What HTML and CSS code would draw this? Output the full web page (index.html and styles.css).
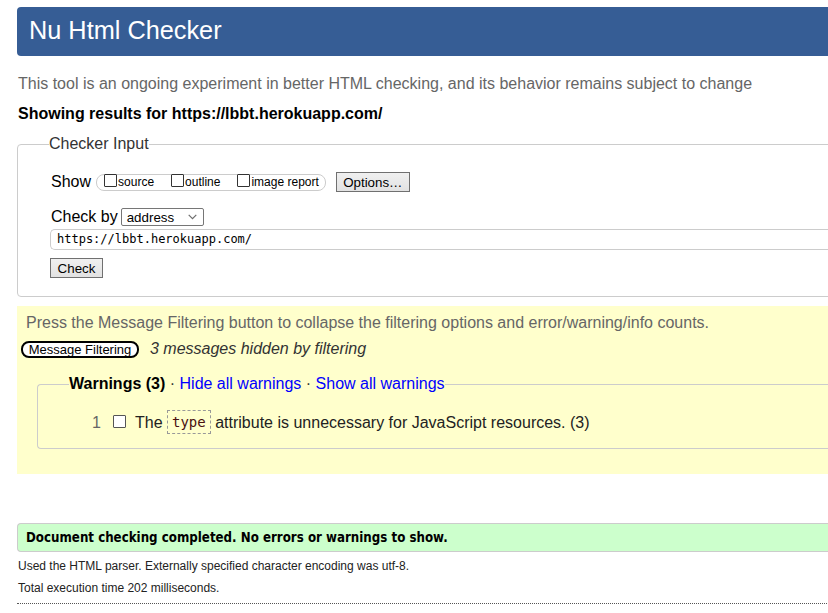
FILE: index.html
```html
<!DOCTYPE html>
<html lang="en">
<head>
<meta charset="utf-8">
<title>Nu Html Checker</title>
<link rel="stylesheet" href="styles.css">
</head>
<body>
<div class="page">
  <h1 class="title">Nu Html Checker</h1>
  <p class="intro">This tool is an ongoing experiment in better HTML checking, and its behavior remains subject to change</p>
  <p class="showing">Showing results for https://lbbt.herokuapp.com/</p>

  <fieldset class="input-box">
    <legend class="input-legend">Checker Input</legend>
    <div class="row row-show">
      <span class="row-label">Show</span>
      <span class="pill">
        <span class="opt"><span class="cb"></span><span class="opt-text">source</span></span>
        <span class="opt"><span class="cb"></span><span class="opt-text">outline</span></span>
        <span class="opt opt-last"><span class="cb"></span><span class="opt-text">image report</span></span>
      </span>
      <span class="btn btn-options">Options…</span>
    </div>
    <div class="row row-by">
      <span class="row-label">Check by</span>
      <span class="select">address
        <svg class="chev" width="9" height="6" viewBox="0 0 9 6"><path d="M0.7 0.9 L4.5 4.6 L8.3 0.9" fill="none" stroke="#6d6d6d" stroke-width="1.2"/></svg>
      </span>
    </div>
    <div class="url">https://lbbt.herokuapp.com/</div>
    <div class="row-check"><span class="btn btn-check">Check</span></div>
  </fieldset>

  <div class="results">
    <p class="filter-note">Press the Message Filtering button to collapse the filtering options and error/warning/info counts.</p>
    <div class="filter-row">
      <span class="filter-btn">Message Filtering</span>
      <span class="hidden-note">3 messages hidden by filtering</span>
    </div>
    <fieldset class="warn-box">
      <legend class="warn-legend"><b>Warnings (3)</b> · <a class="lnk">Hide all warnings</a> · <a class="lnk">Show all warnings</a></legend>
      <div class="warn-item">
        <span class="num">1</span>
        <span class="cb cb-item"></span>
        <span class="msg">The <code class="code">type</code> attribute is unnecessary for JavaScript resources. (3)</span>
      </div>
    </fieldset>
  </div>

  <div class="success">Document checking completed. No errors or warnings to show.</div>
  <p class="details">Used the HTML parser. Externally specified character encoding was utf-8.</p>
  <p class="details details-2">Total execution time 202 milliseconds.</p>
  <div class="dotted"></div>
</div>
</body>
</html>
```

FILE: styles.css
```css
html {
  overflow: hidden;
  background: #fff;
}
body {
  margin: 0;
  font-family: "Liberation Sans", Arial, sans-serif;
  color: #000;
}
.page {
  margin-left: 17px;
  width: 920px;
}
.title {
  margin: 7px 0 0;
  height: 49px;
  box-sizing: border-box;
  padding: 0 0 2px 12px;
  line-height: 47px;
  font-size: 25.3px;
  font-weight: normal;
  color: #fff;
  background: #365d95;
  border-radius: 4px;
}
.intro {
  margin: 19px 0 0 1px;
  font-size: 16px;
  line-height: 18px;
  color: #666;
}
.showing {
  margin: 12px 0 0 1px;
  font-size: 16px;
  line-height: 18px;
  font-weight: bold;
}
.input-box {
  margin: 12px 0 0;
  padding: 18px 0 18px 33px;
  border: 1px solid #ccc;
  border-radius: 4px;
  min-width: 0;
}
.input-legend {
  padding: 0;
  margin-left: -2px;
  font-size: 16px;
  line-height: 18px;
  color: #333;
}
.row {
  display: flex;
  align-items: center;
  height: 22px;
  font-size: 16px;
}
.row-by {
  margin-top: 14px;
  height: 20px;
}
.row-label {
  line-height: 18px;
}
.pill {
  display: flex;
  align-items: center;
  height: 17px;
  box-sizing: border-box;
  margin-left: 5px;
  padding: 0 6px 0 7px;
  border: 1px solid #ccc;
  border-radius: 8px;
}
.opt {
  display: flex;
  align-items: center;
  margin-right: 17px;
}
.opt-last {
  margin-right: 0;
}
.cb {
  display: inline-block;
  width: 13px;
  height: 13px;
  box-sizing: border-box;
  border: 1px solid #333;
  border-radius: 1px;
  background: #fff;
  margin-top: -3px;
}
.opt-text {
  margin-left: 1px;
  font-size: 12px;
  line-height: 14px;
  color: #000;
}
.btn {
  display: inline-flex;
  align-items: center;
  justify-content: center;
  box-sizing: border-box;
  height: 20px;
  font-size: 13.33px;
  border: 1px solid #707070;
  background: linear-gradient(#f0f0f0, #e2e2e2);
  color: #000;
}
.btn-options {
  margin-left: 10px;
  width: 74px;
}
.select {
  display: inline-flex;
  align-items: center;
  margin-left: 3px;
  width: 83px;
  height: 18px;
  box-sizing: border-box;
  padding: 0 5px 0 5px;
  border: 1px solid #767676;
  border-radius: 2px;
  font-size: 13.33px;
  background: #fff;
  justify-content: space-between;
}
.chev {
  margin-right: 1px;
}
.url {
  margin: 2px 0 0 -1px;
  height: 21px;
  box-sizing: border-box;
  padding-left: 6px;
  border: 1px solid #ccc;
  border-right: 0;
  border-radius: 5px 0 0 5px;
  font-family: "DejaVu Sans Mono", "Liberation Mono", monospace;
  font-size: 12px;
  line-height: 19px;
  color: #000;
}
.row-check {
  margin: 8px 0 0 -1px;
  height: 20px;
}
.btn-check {
  width: 53px;
}
.results {
  margin-top: 9px;
  padding: 8px 0 25px 4px;
  background: #ffffcc;
}
.filter-note {
  margin: 0 0 0 5px;
  font-size: 16px;
  line-height: 18px;
  color: #666;
}
.filter-row {
  display: flex;
  align-items: center;
  margin-top: 7px;
  height: 20px;
}
.filter-btn {
  display: inline-flex;
  align-items: center;
  justify-content: center;
  box-sizing: border-box;
  width: 118px;
  height: 17px;
  border: 2px solid #000;
  border-radius: 8px;
  background: #fff;
  font-size: 13px;
  color: #000;
}
.hidden-note {
  margin-left: 11px;
  font-size: 16px;
  font-style: italic;
  color: #333;
}
.warn-box {
  margin: 16px 0 0 16px;
  padding: 18px 0 13px 31px;
  border: 1px solid #ccc;
  border-right: 0;
  border-radius: 4px 0 0 4px;
  min-width: 0;
}
.warn-legend {
  padding: 0;
  font-size: 16px;
  line-height: 18px;
  color: #333;
}
.warn-legend b {
  color: #000;
}
.lnk {
  color: #00f;
  text-decoration: none;
}
.warn-item {
  display: flex;
  align-items: center;
  height: 24px;
  font-size: 16px;
  color: #222;
}
.num {
  margin-left: 23px;
  width: 9px;
  color: #666;
}
.cb-item {
  margin: -3px 9px 0 12px;
  border-color: #555;
}
.code {
  display: inline-block;
  box-sizing: border-box;
  height: 24px;
  padding: 0 4px;
  line-height: 22px;
  border: 1px dashed #999;
  font-family: "DejaVu Sans Mono", monospace;
  font-size: 14px;
  color: #4a1010;
  vertical-align: middle;
  margin: -3px 0 0;
}
.success {
  margin-top: 49px;
  height: 29px;
  box-sizing: border-box;
  padding-left: 8px;
  border: 1px solid #ccc;
  border-right: 0;
  border-radius: 4px 0 0 4px;
  background: #ccffcc;
  font-family: "DejaVu Sans Condensed", "DejaVu Sans", sans-serif;
  font-weight: bold;
  font-size: 13.2px;
  line-height: 27px;
}
.details {
  margin: 7px 0 0 1px;
  font-size: 12px;
  line-height: 14px;
  color: #222;
}
.details-2 {
  margin-top: 8px;
}
.dotted {
  margin-top: 8px;
  border-top: 1px dotted #555;
}
```
